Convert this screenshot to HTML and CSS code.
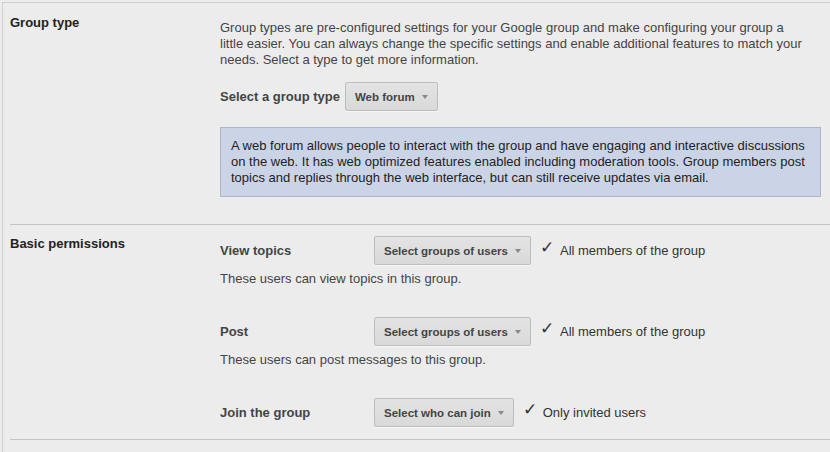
FILE: index.html
```html
<!DOCTYPE html>
<html lang="en">
<head>
    <meta charset="UTF-8">
    <title>Group settings</title>
    <link rel="stylesheet" href="styles.css">
</head>
<body>

    <div class="page">

        <!-- Group type -->
        <div class="section first">
            <div class="section-title">Group type</div>
            <div class="section-body">
                <p class="intro">Group types are pre-configured settings for your Google group and make configuring your group a little easier. You can always change the specific settings and enable additional features to match your needs. Select a type to get more information.</p>

                <div class="type-row">
                    <span class="type-label">Select a group type</span>
                    <button class="drop">Web forum <span class="caret"></span></button>
                </div>

                <div class="info-box">
                    A web forum allows people to interact with the group and have engaging and interactive discussions on the web. It has web optimized features enabled including moderation tools. Group members post topics and replies through the web interface, but can still receive updates via email.
                </div>
            </div>
        </div>

        <!-- Basic permissions -->
        <div class="section">
            <div class="section-title">Basic permissions</div>
            <div class="section-body">
                <div class="perm">
                    <div class="perm-row">
                        <span class="perm-label">View topics</span>
                        <button class="drop">Select groups of users <span class="caret"></span></button>
                        <span class="check">&#10003;</span>
                        <span class="perm-value">All members of the group</span>
                    </div>
                    <p class="perm-note">These users can view topics in this group.</p>
                </div>

                <div class="perm">
                    <div class="perm-row">
                        <span class="perm-label">Post</span>
                        <button class="drop">Select groups of users <span class="caret"></span></button>
                        <span class="check">&#10003;</span>
                        <span class="perm-value">All members of the group</span>
                    </div>
                    <p class="perm-note">These users can post messages to this group.</p>
                </div>

                <div class="perm last">
                    <div class="perm-row">
                        <span class="perm-label">Join the group</span>
                        <button class="drop">Select who can join <span class="caret"></span></button>
                        <span class="check">&#10003;</span>
                        <span class="perm-value">Only invited users</span>
                    </div>
                </div>
            </div>
        </div>

    </div>

</body>
</html>
```

FILE: styles.css
```css
/* Genel */
body {
    margin: 0;
    padding: 0;
    background-color: #ececec;
    font-family: "Liberation Sans", Arial, sans-serif;
    font-size: 13px;
    line-height: 16px;
    color: #444;
}

.page {
    margin: 2px 0 0 2px;
    border-left: 1px solid #cfcfcf;
    border-top: 1px solid #cfcfcf;
    height: 452px;
}

/* Bolumler */
.section {
    display: flex;
    margin-left: 7px;
    border-top: 1px solid #c4c4c4;
    border-bottom: 1px solid #c4c4c4;
    padding-bottom: 12px;
}

.section.first {
    border-top: none;
    border-bottom: none;
    margin-top: -1px;
    padding-bottom: 27px;
}

.section-title {
    width: 210px;
    flex-shrink: 0;
    padding-top: 11px;
    font-weight: bold;
    color: #222;
}

.section.first .section-title {
    padding-top: 13px;
}

.section-body {
    flex: 1;
    padding-top: 11px;
    padding-right: 9px;
}

.section.first .section-body {
    padding-top: 18px;
}

.intro {
    margin: 0;
    max-width: 590px;
}

.type-row {
    display: flex;
    align-items: center;
    gap: 5px;
    margin-top: 14px;
}

.type-label {
    font-weight: bold;
    color: #444;
}

/* Acilir dugme */
.drop {
    display: inline-flex;
    align-items: center;
    box-sizing: border-box;
    height: 29px;
    padding: 0 9px;
    border: 1px solid #bdbdbd;
    border-radius: 2px;
    background: linear-gradient(#e3e3e3, #d9d9d9);
    font-family: "Liberation Sans", Arial, sans-serif;
    font-size: 11.5px;
    font-weight: bold;
    color: #444;
    box-shadow: 0 1px 0 rgba(255, 255, 255, 0.6);
}

.caret {
    display: inline-block;
    width: 0;
    height: 0;
    margin-left: 7px;
    border-left: 3.5px solid transparent;
    border-right: 3.5px solid transparent;
    border-top: 4px solid #888;
}

/* Mavi bilgi kutusu */
.info-box {
    margin-top: 16px;
    padding: 10px 10px;
    background-color: #cbd4e6;
    border: 1px solid #adb6c8;
    color: #222;
}

/* Izinler */
.perm {
    padding-bottom: 30px;
}

.perm.last {
    padding-bottom: 0;
}

.perm-row {
    display: flex;
    align-items: center;
}

.perm-label {
    width: 154px;
    font-weight: bold;
    color: #444;
}

.check {
    width: 13px;
    margin-left: 9px;
    margin-right: 7px;
    font-size: 17px;
    color: #333;
    position: relative;
    top: -3px;
}

.perm-value {
    color: #333;
}

.perm-note {
    margin: 6px 0 0 0;
}
```
